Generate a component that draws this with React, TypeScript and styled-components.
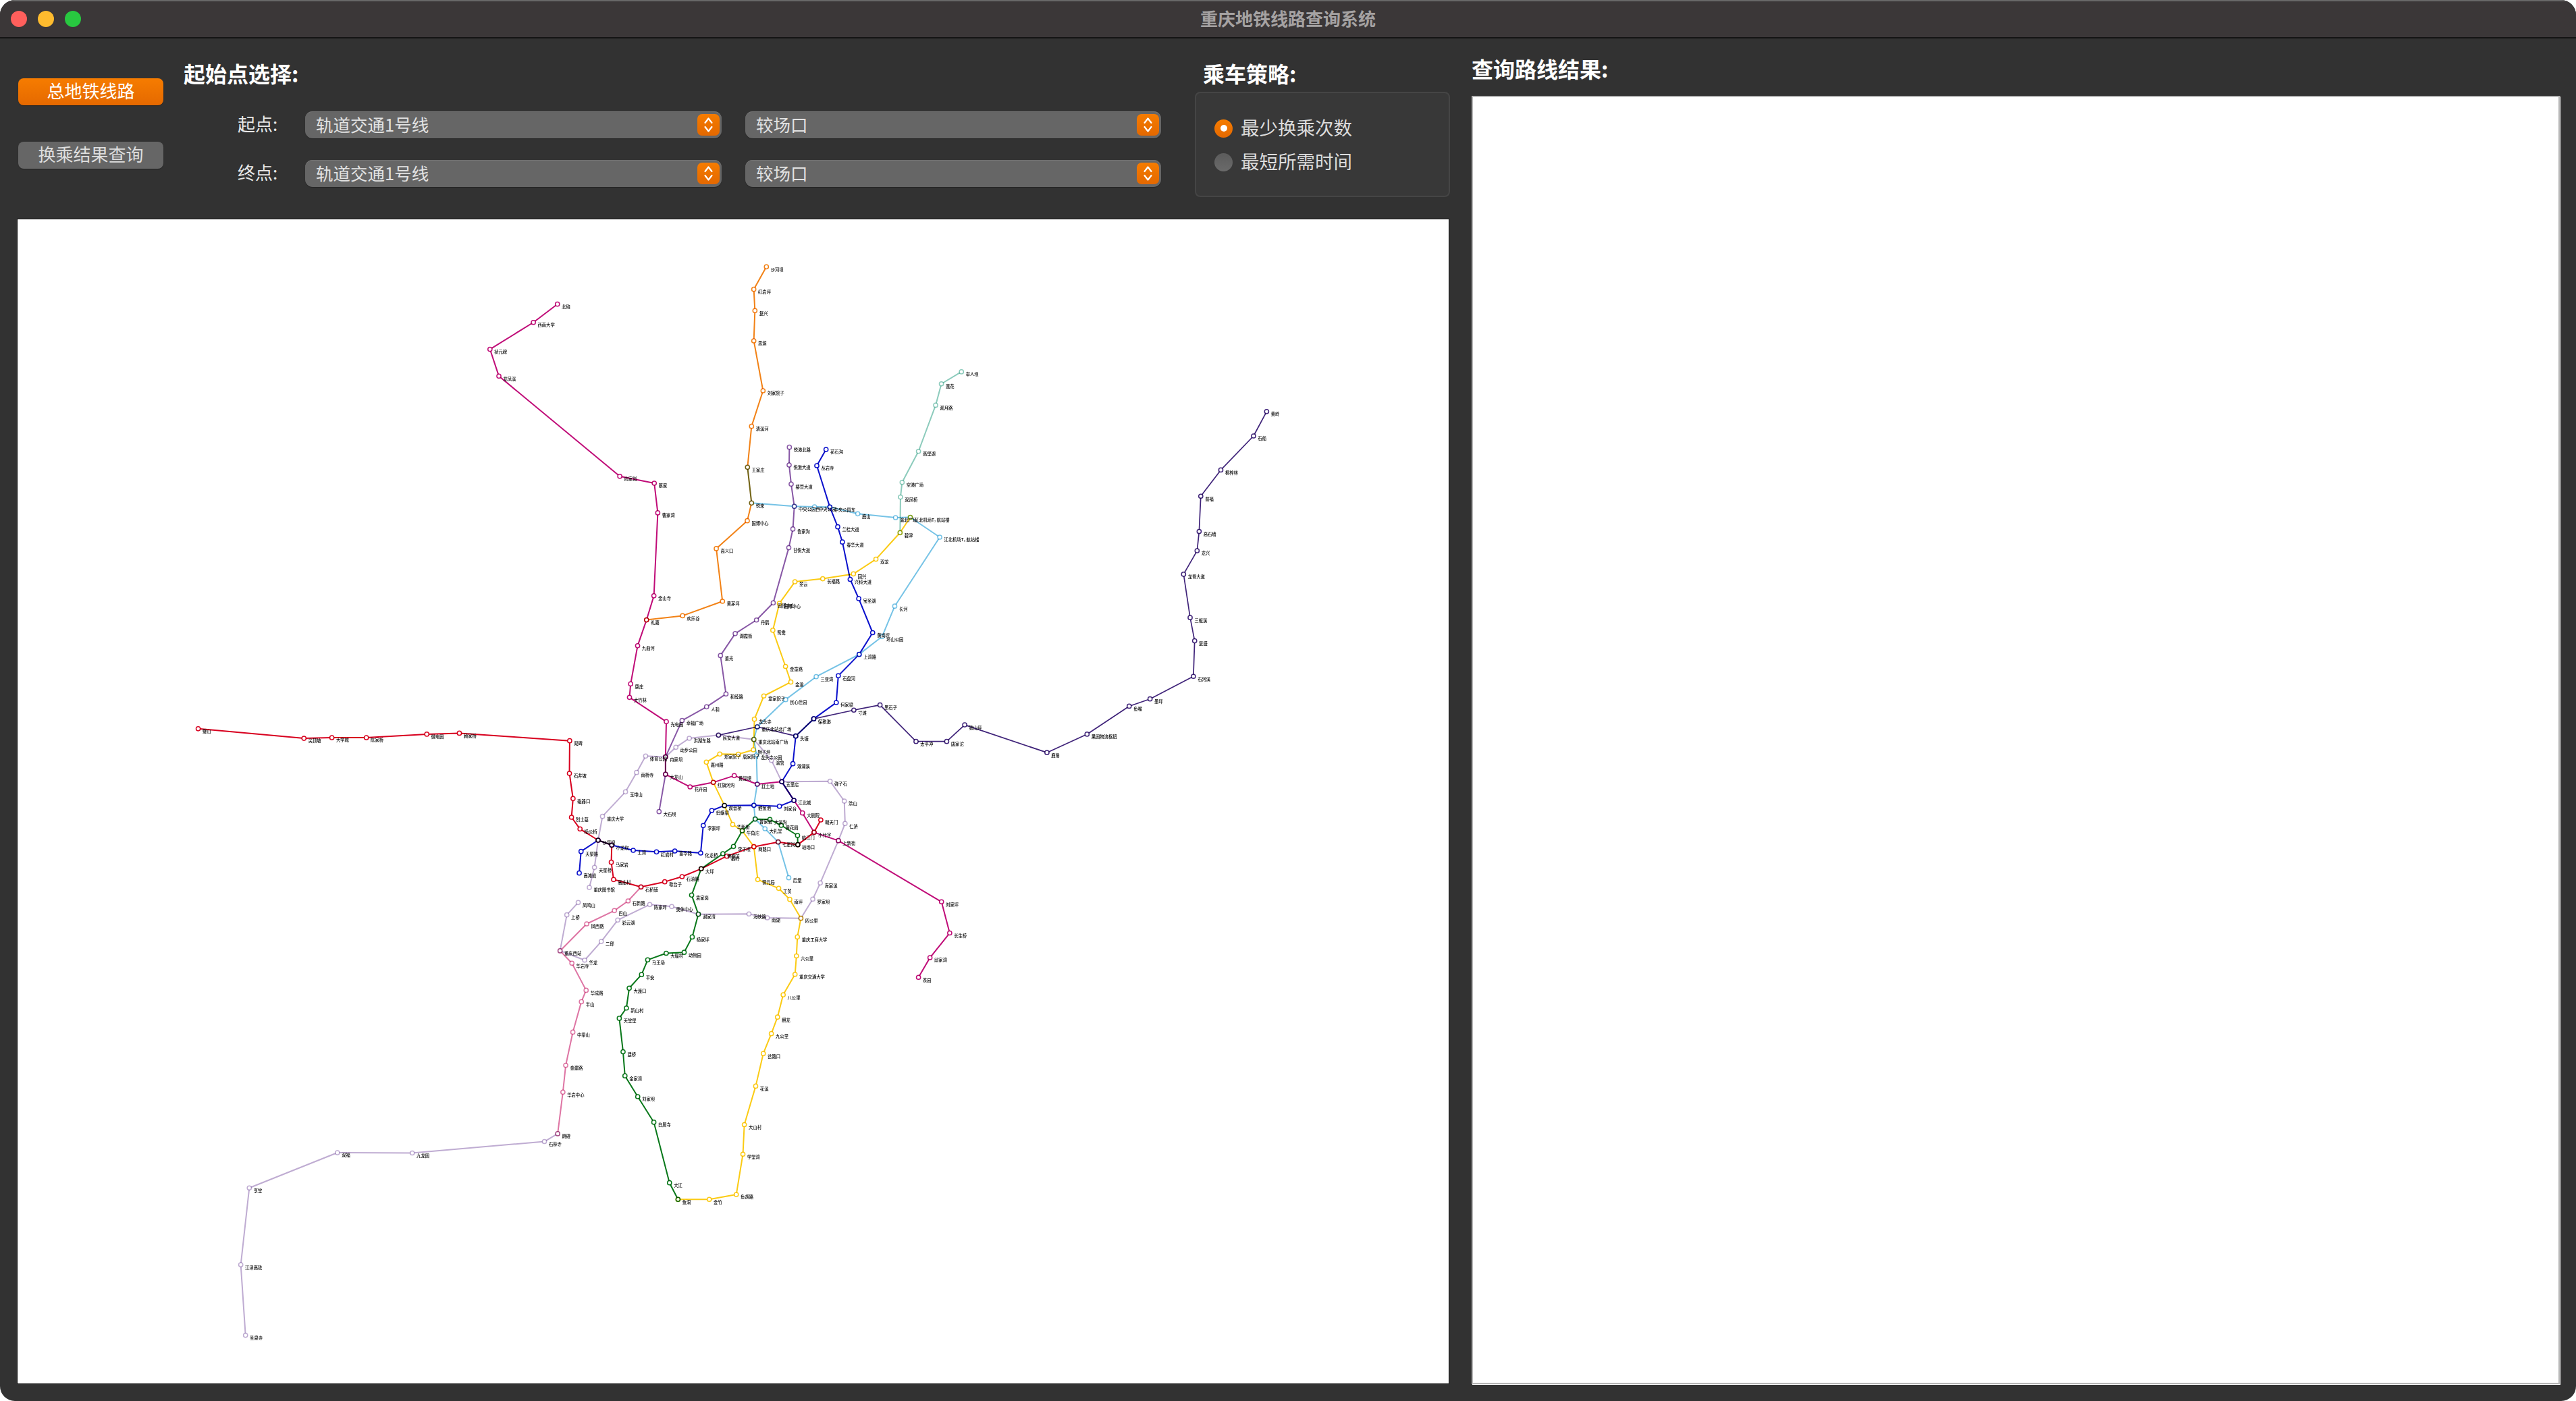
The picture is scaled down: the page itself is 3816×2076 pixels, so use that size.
import React from "react";
import styled, { createGlobalStyle } from "styled-components";

type Pt = [number, number];

const z3 = (X: number, Y: number): Pt => [200 + X / 1.742, 340 + Y / 1.96];
const z4 = (X: number, Y: number): Pt => [1000 + X / 1.65, 500 + Y / 2.24];
const z5 = (X: number, Y: number): Pt => [780 + X / 2.613, 1000 + Y / 3];
const z6 = (X: number, Y: number): Pt => [250 + X / 1.425, 1350 + Y / 2.24];
const z9 = (X: number, Y: number): Pt => [1020 + X / 3, 370 + Y / 3];
const th = (X: number, Y: number): Pt => [X * 2.434, Y * 2.434];

const STATIONS: Record<string, Pt> = {
  璧山: z3(163, 1450), 尖顶坡: z3(436, 1478), 大学城: z3(508, 1476), 陈家桥: z3(597, 1476),
  微电园: z3(753, 1466), 赖家桥: z3(837, 1463), 双碑: z5(167, 293), 石井坡: z5(166, 438),
  磁器口: z5(180, 550), 烈士墓: z5(174, 633), 杨公桥: z5(207, 685), 沙坪坝: z5(277, 735),
  小龙坎: z5(330, 757), 马家岩: z5(328, 833), 高庙村: z5(337, 910), 石桥铺: z5(443, 943),
  歇台子: z5(535, 920), 石油路: z5(602, 897), 大坪: z5(676, 862), 鹅岭: z5(775, 806),
  两路口: z5(880, 764), 七星岗: z5(974, 743), 较场口: z5(1050, 755), 小什字: z5(1113, 700),
  朝天门: z5(1139, 645),

  北碚: z3(1090, 217), 西南大学: z3(1028, 270), 状元碑: z3(916, 348), 龙凤溪: z3(939, 426),
  向家岗: z3(1251, 717), 蔡家: z3(1340, 737), 曹家湾: z3(1349, 823), 金山寺: z3(1339, 1064),
  礼嘉: z3(1320, 1134), 九曲河: z3(1297, 1209), 康庄: z3(1279, 1320), 大竹林: z3(1276, 1359),
  光电园: z5(541, 208), 冉家坝: z5(538, 365), 大龙山: z5(538, 442), 花卉园: z5(633, 498),
  红旗河沟: z5(723, 478), 黄泥塝: z5(804, 448), 红土地: z5(893, 486), 五里店: z5(988, 475),
  江北城: z5(1035, 558), 大剧院: z5(1068, 614), 上新街: z5(1207, 737),
  刘家坪: th(573, 549), 长生桥: th(578, 568), 邱家湾: th(566, 583), 茶园: th(559, 595),

  悦港北路: z9(448, 878), 悦港大道: z9(447, 957), 椿萱大道: z9(456, 1042), 中央公园西: z9(470, 1141),
  鲁家沟: z4(288, 636), 甘悦大道: z4(278, 698), 园博中心: z4(240, 881), 丹鹤: z4(199, 938),
  湖霞街: z4(147, 983), 重光: z4(111, 1056), 和睦路: z5(772, 85), 人和: z5(697, 142),
  幸福广场: z5(602, 203), 大石坝: z5(513, 608),

  花石沟: z9(611, 888), 丛岩寺: z9(570, 960), 中央公园东: z9(628, 1144), 兰桂大道: z9(663, 1232),
  春华大道: z4(409, 679), 兴科大道: z4(428, 803), 宝圣湖: z4(449, 867), 黄岗坪: z4(483, 980),
  上湾路: z4(450, 1052), 石盘河: z4(399, 1123), 何家梁: z4(394, 1212), 保税港: z4(339, 1266),
  头塘: z4(295, 1323), 溉澜溪: z4(288, 1415), 刘家台: z5(979, 584), 鲤鱼池: z5(880, 580),
  观音桥: z5(766, 581), 蚂蟥梁: z5(717, 603), 李家坪: z5(684, 670), 化龙桥: z5(674, 792),
  富华路: z5(574, 783), 红岩村: z5(503, 787), 土湾: z5(413, 780), 天梨路: z5(211, 785),
  高滩岩: z5(204, 881),

  "江北机场T₂ 航站楼": z4(575, 597), 碧津: z4(550, 648), 双龙: z4(491, 736), 回兴: z4(436, 785),
  长福路: z4(361, 801), 翠云: z4(293, 811), "园博中心 ": z4(255, 883), 鸳鸯: z4(239, 972),
  金童路: z4(270, 1092), 金渝: z4(283, 1144), 童家院子: z4(217, 1190), 龙头寺: z5(882, 197),
  重庆北站南广场: z5(880, 287), 狮子坪: z5(878, 333), 唐家院子: z5(820, 353), 郑家院子: z5(748, 352),
  嘉州路: z5(696, 388), 华新街: z5(798, 665), 牛角沱: z5(835, 693), 铜元局: z5(895, 910),
  工贸: z5(976, 949), 南坪: z5(1019, 998), 四公里: z5(1062, 1082), 重庆工商大学: z6(1327, 86),
  六公里: z6(1325, 149), 重庆交通大学: z6(1322, 210), 八公里: z6(1297, 278), 麒龙: z6(1285, 352),
  九公里: z6(1272, 407), 岔路口: z6(1255, 473), 花溪: z6(1239, 581), 大山村: z6(1215, 709),
  学堂湾: z6(1212, 807), 鱼胡路: z6(1198, 941), 金竹: z6(1141, 957), 鱼洞: z6(1075, 957),

  临江门: z5(1049, 714), 黄花园: z5(986, 669), 大溪沟: z5(942, 643), 曾家岩: z5(885, 641),
  李子坝: z5(801, 763), 佛图关: z5(760, 795), 袁家岗: z5(639, 979), 谢家湾: z5(665, 1064),
  杨家坪: z6(1105, 86), 动物园: z6(1088, 137), 大堰村: z6(1050, 140), 马王场: z6(1011, 162),
  平安: z6(998, 211), 大渡口: z6(972, 256), 新山村: z6(966, 322), 天堂堡: z6(951, 356),
  建桥: z6(959, 467), 金家湾: z6(963, 547), 刘家坝: z6(990, 616), 白居寺: z6(1024, 701),
  大江: z6(1057, 902),

  王家庄: z9(262, 967), 悦来: z9(280, 1126), 中央公园: z9(560, 1143), 鹿山: z9(752, 1174),
  渝北广场: z9(920, 1191), "江北机场T₃ 航站楼": z4(647, 663), 长河: z4(537, 892), 环山公园: z4(506, 993),
  三亚湾: z4(345, 1126), 民心佳园: z5(1003, 110), 重庆北站北广场: z5(893, 231), 龙头寺公园: z5(890, 357),
  大礼堂: z5(923, 684), 后堡: z5(1015, 902),

  沙河坝: z9(346, 76), 红岩坪: z9(290, 176), 复兴: z9(295, 271), 思源: z9(290, 405),
  刘家院子: z9(331, 627), 清溪河: z9(280, 785), 国博中心: z9(261, 1205), 高义口: z3(1500, 927),
  黄茅坪: z3(1516, 1080), 欢乐谷: z3(1413, 1122),

  举人坝: z4(700, 114), 莲花: z4(651, 154), 观月路: z4(637, 225), 高堡湖: z4(595, 378),
  空港广场: z4(555, 481), 双凤桥: z4(551, 530),

  民安大道: z5(743, 268), 寸滩: z4(437, 1237), 黑石子: z4(501, 1220), 太平冲: z4(589, 1341),
  唐家沱: z4(664, 1341), 铁山坪: z4(708, 1286), 鹿角: z4(909, 1378), 果园物流枢纽: z4(1007, 1317),
  鱼嘴: z4(1110, 1224), 墨坪: z4(1161, 1200), 石河溪: z4(1267, 1125), 复盛: z4(1270, 1007),
  三板溪: z4(1259, 930), 龙脊大道: z4(1243, 786), 龙兴: z4(1276, 708), 高石墙: z4(1281, 644),
  普福: z4(1285, 527), 桐梓林: z4(1334, 440), 石船: z4(1414, 327), 黄岭: z4(1446, 246),

  重庆图书馆: z5(243, 945), 天星桥: z5(263, 856), 重庆大学: z5(294, 629), 玉带山: z5(383, 520),
  南桥寺: z5(426, 434), 体育公园: z5(461, 361), 动步公园: z5(578, 322), 洪湖东路: z5(630, 282),
  渝鲁: z5(948, 380), 弹子石: z5(1175, 473), 涂山: z5(1230, 561), 仁济: z5(1233, 661),
  海棠溪: z5(1137, 925), 罗家坝: z5(1108, 997), 南湖: z5(932, 1080), 海峡路: z5(861, 1063),
  奥体中心: z5(562, 1030), 陈家坪: z5(477, 1021), 彩云湖: z5(353, 1090), 二郎: z6(913, 101),
  华龙: z6(878, 163), 重庆西站: z6(826, 132), 上桥: z5(156, 1067), 凤鸣山: z5(200, 1012),

  石新路: z5(393, 1005), 巴山: z5(340, 1048), 凤西路: z5(233, 1107), 华岩寺: z6(851, 173),
  华成路: z6(881, 263), 半山: z6(871, 301), 中梁山: z6(853, 402), 金建路: z6(838, 512),
  华岩中心: z6(832, 601), 跳磴: z6(821, 739),

  石林寺: z6(793, 765), 九龙园: z6(514, 803), 双福: z6(356, 802), 享堂: z6(170, 919),
  江津高铁: z6(152, 1174), 圣泉寺: z6(162, 1408),
};

const T2 = "江北机场T₂ 航站楼";
const T3 = "江北机场T₃ 航站楼";

const LINES: { color: string; width?: number; stops: string[] }[] = [
  {
    color: "#d8001f",
    stops: ["璧山", "尖顶坡", "大学城", "陈家桥", "微电园", "赖家桥", "双碑", "石井坡", "磁器口", "烈士墓", "杨公桥", "沙坪坝", "小龙坎", "马家岩", "高庙村", "石桥铺", "歇台子", "石油路", "大坪", "鹅岭", "两路口", "七星岗", "较场口", "小什字", "朝天门"],
  },
  {
    color: "#c00c78",
    stops: ["北碚", "西南大学", "状元碑", "龙凤溪", "向家岗", "蔡家", "曹家湾", "金山寺", "礼嘉", "九曲河", "康庄", "大竹林", "光电园", "冉家坝", "大龙山", "花卉园", "红旗河沟", "黄泥塝", "红土地", "五里店", "江北城", "大剧院", "小什字", "上新街", "刘家坪", "长生桥", "邱家湾", "茶园"],
  },
  {
    color: "#8858a6",
    stops: ["悦港北路", "悦港大道", "椿萱大道", "中央公园西", "鲁家沟", "甘悦大道", "园博中心", "丹鹤", "湖霞街", "重光", "和睦路", "人和", "幸福广场", "冉家坝", "大龙山", "大石坝"],
  },
  {
    color: "#0a10cc",
    stops: ["花石沟", "丛岩寺", "中央公园东", "兰桂大道", "春华大道", "兴科大道", "宝圣湖", "黄岗坪", "上湾路", "石盘河", "何家梁", "保税港", "头塘", "溉澜溪", "五里店", "江北城", "刘家台", "鲤鱼池", "观音桥", "蚂蟥梁", "李家坪", "化龙桥", "富华路", "红岩村", "土湾", "小龙坎", "沙坪坝", "天梨路", "高滩岩"],
  },
  {
    color: "#fbcb14",
    stops: [T2, "碧津", "双龙", "回兴", "长福路", "翠云", "园博中心 ", "鸳鸯", "金童路", "金渝", "童家院子", "龙头寺", "重庆北站南广场", "狮子坪", "唐家院子", "郑家院子", "嘉州路", "红旗河沟", "观音桥", "华新街", "牛角沱", "两路口", "铜元局", "工贸", "南坪", "四公里", "重庆工商大学", "六公里", "重庆交通大学", "八公里", "麒龙", "九公里", "岔路口", "花溪", "大山村", "学堂湾", "鱼胡路", "金竹", "鱼洞"],
  },
  {
    color: "#08781a",
    stops: ["较场口", "临江门", "黄花园", "大溪沟", "曾家岩", "牛角沱", "李子坝", "佛图关", "大坪", "袁家岗", "谢家湾", "杨家坪", "动物园", "大堰村", "马王场", "平安", "大渡口", "新山村", "天堂堡", "建桥", "金家湾", "刘家坝", "白居寺", "大江", "鱼洞"],
  },
  {
    color: "#76c3e6",
    stops: ["王家庄", "悦来", "中央公园西", "中央公园", "中央公园东", "鹿山", "渝北广场", T2, T3, "长河", "环山公园", "上湾路", "三亚湾", "民心佳园", "重庆北站北广场", "重庆北站南广场", "龙头寺公园", "红土地", "鲤鱼池", "曾家岩", "大礼堂", "七星岗", "后堡"],
  },
  {
    color: "#f28216",
    stops: ["沙河坝", "红岩坪", "复兴", "思源", "刘家院子", "清溪河", "王家庄", "悦来", "国博中心", "高义口", "黄茅坪", "欢乐谷", "礼嘉"],
  },
  {
    color: "#8ccbbc",
    stops: ["举人坝", "莲花", "观月路", "高堡湖", "空港广场", "双凤桥", "碧津"],
  },
  {
    color: "#40247a",
    width: 1.7,
    stops: ["民安大道", "重庆北站北广场", "头塘", "保税港", "寸滩", "黑石子", "太平冲", "唐家沱", "铁山坪", "鹿角", "果园物流枢纽", "鱼嘴", "墨坪", "石河溪", "复盛", "三板溪", "龙脊大道", "龙兴", "高石墙", "普福", "桐梓林", "石船", "黄岭"],
  },
  {
    color: "#bfacd2",
    stops: ["重庆图书馆", "天星桥", "沙坪坝", "重庆大学", "玉带山", "南桥寺", "体育公园", "冉家坝", "动步公园", "洪湖东路", "民安大道", "重庆北站南广场", "渝鲁", "五里店", "弹子石", "涂山", "仁济", "上新街", "海棠溪", "罗家坝", "四公里", "南湖", "海峡路", "谢家湾", "奥体中心", "陈家坪", "彩云湖", "二郎", "华龙", "重庆西站", "上桥", "凤鸣山"],
  },
  {
    color: "#de75a4",
    stops: ["石桥铺", "石新路", "巴山", "凤西路", "重庆西站", "华岩寺", "华成路", "半山", "中梁山", "金建路", "华岩中心", "跳磴"],
  },
  {
    color: "#bfacd2",
    stops: ["跳磴", "石林寺", "九龙园", "双福", "享堂", "江津高铁", "圣泉寺"],
  },
];

const FONT = `"Noto Sans CJK SC", "Liberation Sans", sans-serif`;

const GlobalStyle = createGlobalStyle`
  html, body { margin: 0; padding: 0; background: #fff; }
  #root { width: 3816px; height: 2076px; }
`;

const Window = styled.div`
  width: 3816px;
  height: 2076px;
  display: flex;
  flex-direction: column;
  background: #323232;
  border-radius: 22px;
  overflow: hidden;
  font-family: ${FONT};
`;

const TitleBar = styled.header`
  position: relative;
  flex: none;
  height: 57px;
  box-sizing: border-box;
  display: flex;
  align-items: center;
  justify-content: center;
  background: #3b3738;
  border-top: 2px solid #686868;
  border-bottom: 2px solid #141414;
`;

const TrafficLights = styled.div`
  position: absolute;
  left: 16px;
  top: 14px;
  display: flex;
  gap: 16px;
`;

const Light = styled.span<{ $color: string }>`
  width: 24px;
  height: 24px;
  border-radius: 50%;
  background: ${(p) => p.$color};
`;

const Title = styled.h1`
  margin: 0 0 4px;
  font-size: 26px;
  line-height: 34px;
  font-weight: 700;
  color: #a5a2a2;
`;

const Content = styled.main`
  flex: 1;
  min-height: 0;
  display: grid;
  grid-template-columns: 2122px 1612px;
  column-gap: 33px;
  padding: 0 24px 25px 25px;
`;

const LeftColumn = styled.section`
  display: flex;
  flex-direction: column;
  min-height: 0;
`;

const Toolbar = styled.div`
  flex: none;
  height: 267px;
  box-sizing: border-box;
  display: flex;
  align-items: flex-start;
`;

const NavColumn = styled.nav`
  flex: none;
  width: 215px;
  margin-left: 2px;
  padding-top: 59px;
  display: flex;
  flex-direction: column;
  gap: 54px;
`;

const NavButton = styled.button<{ $active?: boolean }>`
  height: 40px;
  box-sizing: border-box;
  padding: 0 0 4px;
  border: none;
  border-radius: 8px;
  font-family: inherit;
  font-size: 26px;
  line-height: 36px;
  color: ${(p) => (p.$active ? "#ffffff" : "#dedede")};
  background: ${(p) => (p.$active ? "linear-gradient(#f67c00, #e56900)" : "#666666")};
  box-shadow: 0 1px 1px rgba(0, 0, 0, 0.3);
`;

const RoutePicker = styled.div`
  flex: none;
  width: 1485px;
  margin-left: 30px;
  padding-top: 33px;
`;

const SectionHeading = styled.h2`
  margin: 0;
  padding-bottom: 4px;
  font-size: 32px;
  line-height: 36px;
  font-weight: 700;
  color: #ffffff;
`;

const PickerRows = styled.div`
  margin-top: 35px;
  display: flex;
  flex-direction: column;
  gap: 32px;
`;

const PickerRow = styled.div`
  display: flex;
  align-items: center;
  padding-left: 80px;
`;

const RowLabel = styled.span`
  flex: none;
  width: 100px;
  padding-bottom: 4px;
  font-size: 26px;
  line-height: 36px;
  color: #e8e8e8;
`;

const Combo = styled.div<{ $wide?: boolean }>`
  flex: none;
  width: ${(p) => (p.$wide ? 617 : 616)}px;
  margin-right: 35px;
  height: 40px;
  box-sizing: border-box;
  display: flex;
  align-items: center;
  justify-content: space-between;
  padding: 0 3px 0 16px;
  border-radius: 11px;
  background: #666666;
  box-shadow: inset 0 1px 0 #747474, 0 1px 1px rgba(0, 0, 0, 0.3);
`;

const ComboText = styled.span`
  padding-bottom: 3px;
  font-size: 25.5px;
  line-height: 36px;
  color: #e2e2e2;
`;

const Stepper = styled.span`
  flex: none;
  width: 33px;
  height: 32px;
  border-radius: 7px;
  display: flex;
  align-items: center;
  justify-content: center;
  background: linear-gradient(#f67c00, #e36800);
`;

const StrategySection = styled.div`
  flex: none;
  width: 378px;
  margin-left: 13px;
  padding-top: 33px;
`;

const StrategyHeading = styled(SectionHeading)`
  padding-left: 12px;
`;

const StrategyBox = styled.div`
  margin-top: 6px;
  height: 156px;
  box-sizing: border-box;
  padding: 34px 0 0 27px;
  display: flex;
  flex-direction: column;
  gap: 14px;
  background: #383838;
  border: 2px solid #454545;
  border-radius: 8px;
`;

const RadioRow = styled.label`
  height: 36px;
  display: flex;
  align-items: center;
  gap: 12px;
`;

const RadioMark = styled.span<{ $checked?: boolean }>`
  width: 27px;
  height: 27px;
  border-radius: 50%;
  display: flex;
  align-items: center;
  justify-content: center;
  background: ${(p) => (p.$checked ? "linear-gradient(#f67c00, #e56900)" : "linear-gradient(#5c5c5c, #6a6a6a)")};
  &::after {
    content: "";
    display: ${(p) => (p.$checked ? "block" : "none")};
    width: 10px;
    height: 10px;
    border-radius: 50%;
    background: #fff;
  }
`;

const RadioText = styled.span`
  padding-bottom: 3px;
  font-size: 27.5px;
  line-height: 33px;
  color: #dcdcdc;
`;

const MapPanel = styled.div`
  flex: 1;
  min-height: 0;
  box-sizing: border-box;
  background: #fff;
  border: 1px solid #101010;
`;

const MapSvg = styled.svg`
  display: block;
  width: 100%;
  height: 100%;
  filter: blur(0.2px);
`;

const Route = styled.polyline<{ $color: string; $width: number }>`
  fill: none;
  stroke: ${(p) => p.$color};
  stroke-width: ${(p) => p.$width};
  stroke-linejoin: round;
  mix-blend-mode: multiply;
`;

const Disc = styled.circle`
  fill: #fff;
`;

const Ring = styled.circle<{ $color: string }>`
  fill: none;
  stroke: ${(p) => p.$color};
  stroke-width: 1.5;
  mix-blend-mode: multiply;
`;

const StationName = styled.text`
  font-family: ${FONT};
  font-size: 6.3px;
  font-weight: 500;
  fill: #000;
`;

const RightColumn = styled.section`
  display: flex;
  flex-direction: column;
  min-height: 0;
  padding-top: 26px;
`;

const ResultPanel = styled.div`
  flex: 1;
  margin-top: 19px;
  background: #fff;
  border: 2px solid #b6b6b6;
  box-shadow: 1px 1px 0 #fff;
`;

const Chevrons = () => (
  <svg width="17" height="24" viewBox="0 0 17 24" fill="none" stroke="#fff" strokeWidth="2.2" strokeLinecap="round" strokeLinejoin="round">
    <path d="M3.5 9 8.5 2.5 13.5 9" />
    <path d="M3.5 15 8.5 21.5 13.5 15" />
  </svg>
);

const ComboBox = ({ text, wide }: { text: string; wide?: boolean }) => (
  <Combo $wide={wide}>
    <ComboText>{text}</ComboText>
    <Stepper>
      <Chevrons />
    </Stepper>
  </Combo>
);

const SubwayMap = () => {
  const names = Object.keys(STATIONS);
  const memberships = LINES.flatMap((l) => l.stops.map((n) => ({ n, color: l.color })));
  return (
    <MapSvg viewBox="26 325 2120 1725" preserveAspectRatio="none">
      {LINES.map((l, i) => (
        <Route
          key={i}
          $color={l.color}
          $width={l.width ?? 2}
          points={l.stops.map((n) => STATIONS[n].join(",")).join(" ")}
        />
      ))}
      {names.map((n) => (
        <Disc key={n} cx={STATIONS[n][0]} cy={STATIONS[n][1]} r={3.1} />
      ))}
      {memberships.map((m, i) => (
        <Ring key={i} $color={m.color} cx={STATIONS[m.n][0]} cy={STATIONS[m.n][1]} r={3.1} />
      ))}
      {names.map((n) => (
        <StationName key={n} x={STATIONS[n][0] + 6.4} y={STATIONS[n][1] + 6.4}>
          {n.trim()}
        </StationName>
      ))}
    </MapSvg>
  );
};

export default function App() {
  return (
    <>
      <GlobalStyle />
      <Window>
        <TitleBar>
          <TrafficLights>
            <Light $color="#ff5f5c" />
            <Light $color="#febb2e" />
            <Light $color="#28c840" />
          </TrafficLights>
          <Title>重庆地铁线路查询系统</Title>
        </TitleBar>
        <Content>
          <LeftColumn>
            <Toolbar>
              <NavColumn>
                <NavButton $active>总地铁线路</NavButton>
                <NavButton>换乘结果查询</NavButton>
              </NavColumn>
              <RoutePicker>
                <SectionHeading>起始点选择:</SectionHeading>
                <PickerRows>
                  <PickerRow>
                    <RowLabel>起点:</RowLabel>
                    <ComboBox text="轨道交通1号线" wide />
                    <ComboBox text="较场口" />
                  </PickerRow>
                  <PickerRow>
                    <RowLabel>终点:</RowLabel>
                    <ComboBox text="轨道交通1号线" wide />
                    <ComboBox text="较场口" />
                  </PickerRow>
                </PickerRows>
              </RoutePicker>
              <StrategySection>
                <StrategyHeading>乘车策略:</StrategyHeading>
                <StrategyBox>
                  <RadioRow>
                    <RadioMark $checked />
                    <RadioText>最少换乘次数</RadioText>
                  </RadioRow>
                  <RadioRow>
                    <RadioMark />
                    <RadioText>最短所需时间</RadioText>
                  </RadioRow>
                </StrategyBox>
              </StrategySection>
            </Toolbar>
            <MapPanel>
              <SubwayMap />
            </MapPanel>
          </LeftColumn>
          <RightColumn>
            <SectionHeading>查询路线结果:</SectionHeading>
            <ResultPanel />
          </RightColumn>
        </Content>
      </Window>
    </>
  );
}
